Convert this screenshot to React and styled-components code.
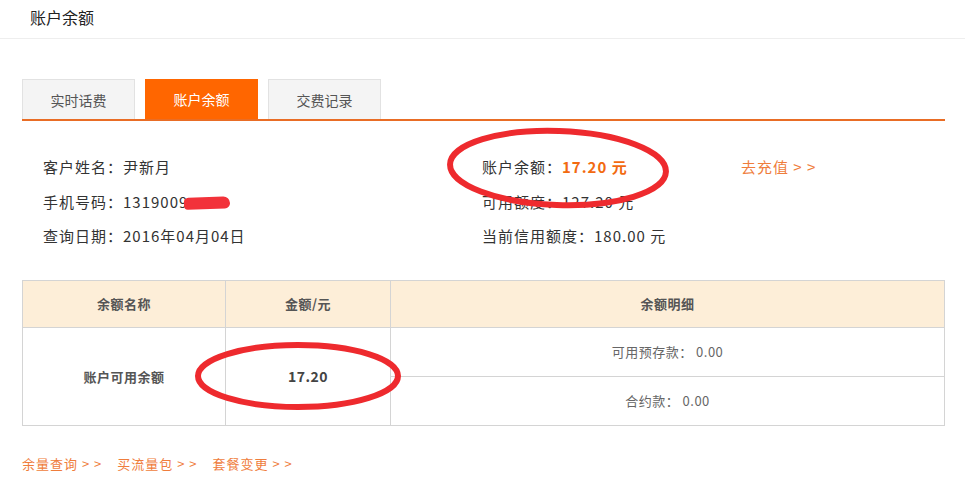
import styled, { createGlobalStyle } from "styled-components";

const GlobalStyle = createGlobalStyle`
  body {
    margin: 0;
    background: #fff;
    font-family: "Noto Sans CJK SC", "Noto Sans", sans-serif;
    color: #333;
  }
`;

const tabs = ["实时话费", "账户余额", "交费记录"];

const links = ["余量查询", "买流量包", "套餐变更"];

const App = () => {
  return (
    <Page>
      <GlobalStyle />
      <Header>账户余额</Header>

      <Content>
        <TabBar>
          {tabs.map((t) => (
            <Tab key={t} $active={t === "账户余额"}>
              {t}
            </Tab>
          ))}
        </TabBar>

        <InfoGrid>
          <InfoCol>
            <InfoRow>客户姓名：尹新月</InfoRow>
            <InfoRow>
              手机号码：1319009<Scribble />
            </InfoRow>
            <InfoRow>查询日期：2016年04月04日</InfoRow>
          </InfoCol>
          <InfoCol>
            <InfoRow>
              账户余额：<Amount>17.20 元</Amount>
            </InfoRow>
            <InfoRow>可用额度：127.20 元</InfoRow>
            <InfoRow>当前信用额度：180.00 元</InfoRow>
          </InfoCol>
          <InfoCol>
            <InfoRow>
              <OrangeLink>去充值 &gt; &gt;</OrangeLink>
            </InfoRow>
          </InfoCol>
        </InfoGrid>

        <Table>
          <thead>
            <tr>
              <Th $w={204}>余额名称</Th>
              <Th $w={166}>金额/元</Th>
              <Th>余额明细</Th>
            </tr>
          </thead>
          <tbody>
            <tr>
              <NameCell rowSpan={2}>账户可用余额</NameCell>
              <MoneyCell rowSpan={2}>17.20</MoneyCell>
              <DetailCell>可用预存款： 0.00</DetailCell>
            </tr>
            <tr>
              <DetailCell>合约款： 0.00</DetailCell>
            </tr>
          </tbody>
        </Table>

        <LinkBar>
          {links.map((l) => (
            <SmallLink key={l}>{l} &gt; &gt;</SmallLink>
          ))}
        </LinkBar>
      </Content>

      {/* 红色手绘圈 */}
      <Marks width="965" height="495" viewBox="0 0 965 495">
        <ellipse
          cx="558"
          cy="168"
          rx="108"
          ry="37"
          fill="none"
          stroke="#ee2a2e"
          strokeWidth="6"
          transform="rotate(2 558 168)"
        />
        <ellipse
          cx="298"
          cy="376"
          rx="100"
          ry="31"
          fill="none"
          stroke="#ee2a2e"
          strokeWidth="6"
        />
      </Marks>
    </Page>
  );
};

export default App;

/* ─── Styled Components ───────────────────────────────────── */

const Page = styled.div`
  position: relative;
  width: 965px;
  height: 495px;
  overflow: hidden;
`;

const Header = styled.div`
  height: 38px;
  line-height: 34px;
  padding-left: 30px;
  font-size: 16px;
  color: #222;
  border-bottom: 1px solid #eee;
`;

const Content = styled.div`
  width: 923px;
  margin-left: 22px;
  padding-top: 40px;
`;

const TabBar = styled.div`
  display: flex;
  gap: 10px;
  border-bottom: 2px solid #e96d25;
`;

const Tab = styled.div`
  width: 113px;
  height: 40px;
  line-height: 40px;
  text-align: center;
  font-size: 14px;
  box-sizing: border-box;
  border: ${(p) => (p.$active ? "none" : "1px solid #e2e2e2")};
  border-bottom: none;
  background: ${(p) => (p.$active ? "#ff6600" : "#f4f4f4")};
  color: ${(p) => (p.$active ? "#fff" : "#555")};
`;

const InfoGrid = styled.div`
  display: grid;
  grid-template-columns: 439px 259px 1fr;
  padding: 29px 0 0 21px;
`;

const InfoCol = styled.div`
  display: flex;
  flex-direction: column;
`;

const InfoRow = styled.div`
  height: 34.5px;
  line-height: 34.5px;
  font-size: 15px;
  letter-spacing: 1px;
  color: #333;
  white-space: nowrap;
`;

const Scribble = styled.span`
  display: inline-block;
  width: 46px;
  height: 12px;
  margin-left: -4px;
  vertical-align: middle;
  background: #f2323a;
  border-radius: 6px 9px 7px 5px;
  transform: rotate(-2deg);
`;

const Amount = styled.span`
  color: #f26a10;
  font-weight: bold;
`;

const OrangeLink = styled.span`
  color: #ef7d3c;
`;

const Table = styled.table`
  width: 100%;
  margin-top: 26px;
  border-collapse: collapse;
  table-layout: fixed;
  font-size: 13px;
  letter-spacing: 0.5px;
`;

const Th = styled.th`
  width: ${(p) => (p.$w ? `${p.$w - 2}px` : "auto")};
  height: 46px;
  padding: 0;
  background: #fdeed8;
  border: 1px solid #d4d4d4;
  color: #555;
  font-weight: bold;
  text-align: center;
`;

const NameCell = styled.td`
  padding: 0;
  border: 1px solid #d4d4d4;
  text-align: center;
  font-weight: bold;
  color: #555;
`;

const MoneyCell = styled.td`
  padding: 0;
  border: 1px solid #d4d4d4;
  text-align: center;
  font-weight: bold;
  font-size: 14px;
  color: #444;
`;

const DetailCell = styled.td`
  height: 48px;
  padding: 0;
  border: 1px solid #d4d4d4;
  text-align: center;
  color: #666;
`;

const LinkBar = styled.div`
  display: flex;
  gap: 15px;
  margin-top: 28px;
`;

const SmallLink = styled.span`
  font-size: 13px;
  letter-spacing: 1px;
  color: #ef7d3c;
  line-height: 20px;
`;

const Marks = styled.svg`
  position: absolute;
  left: 0;
  top: 0;
  pointer-events: none;
`;
